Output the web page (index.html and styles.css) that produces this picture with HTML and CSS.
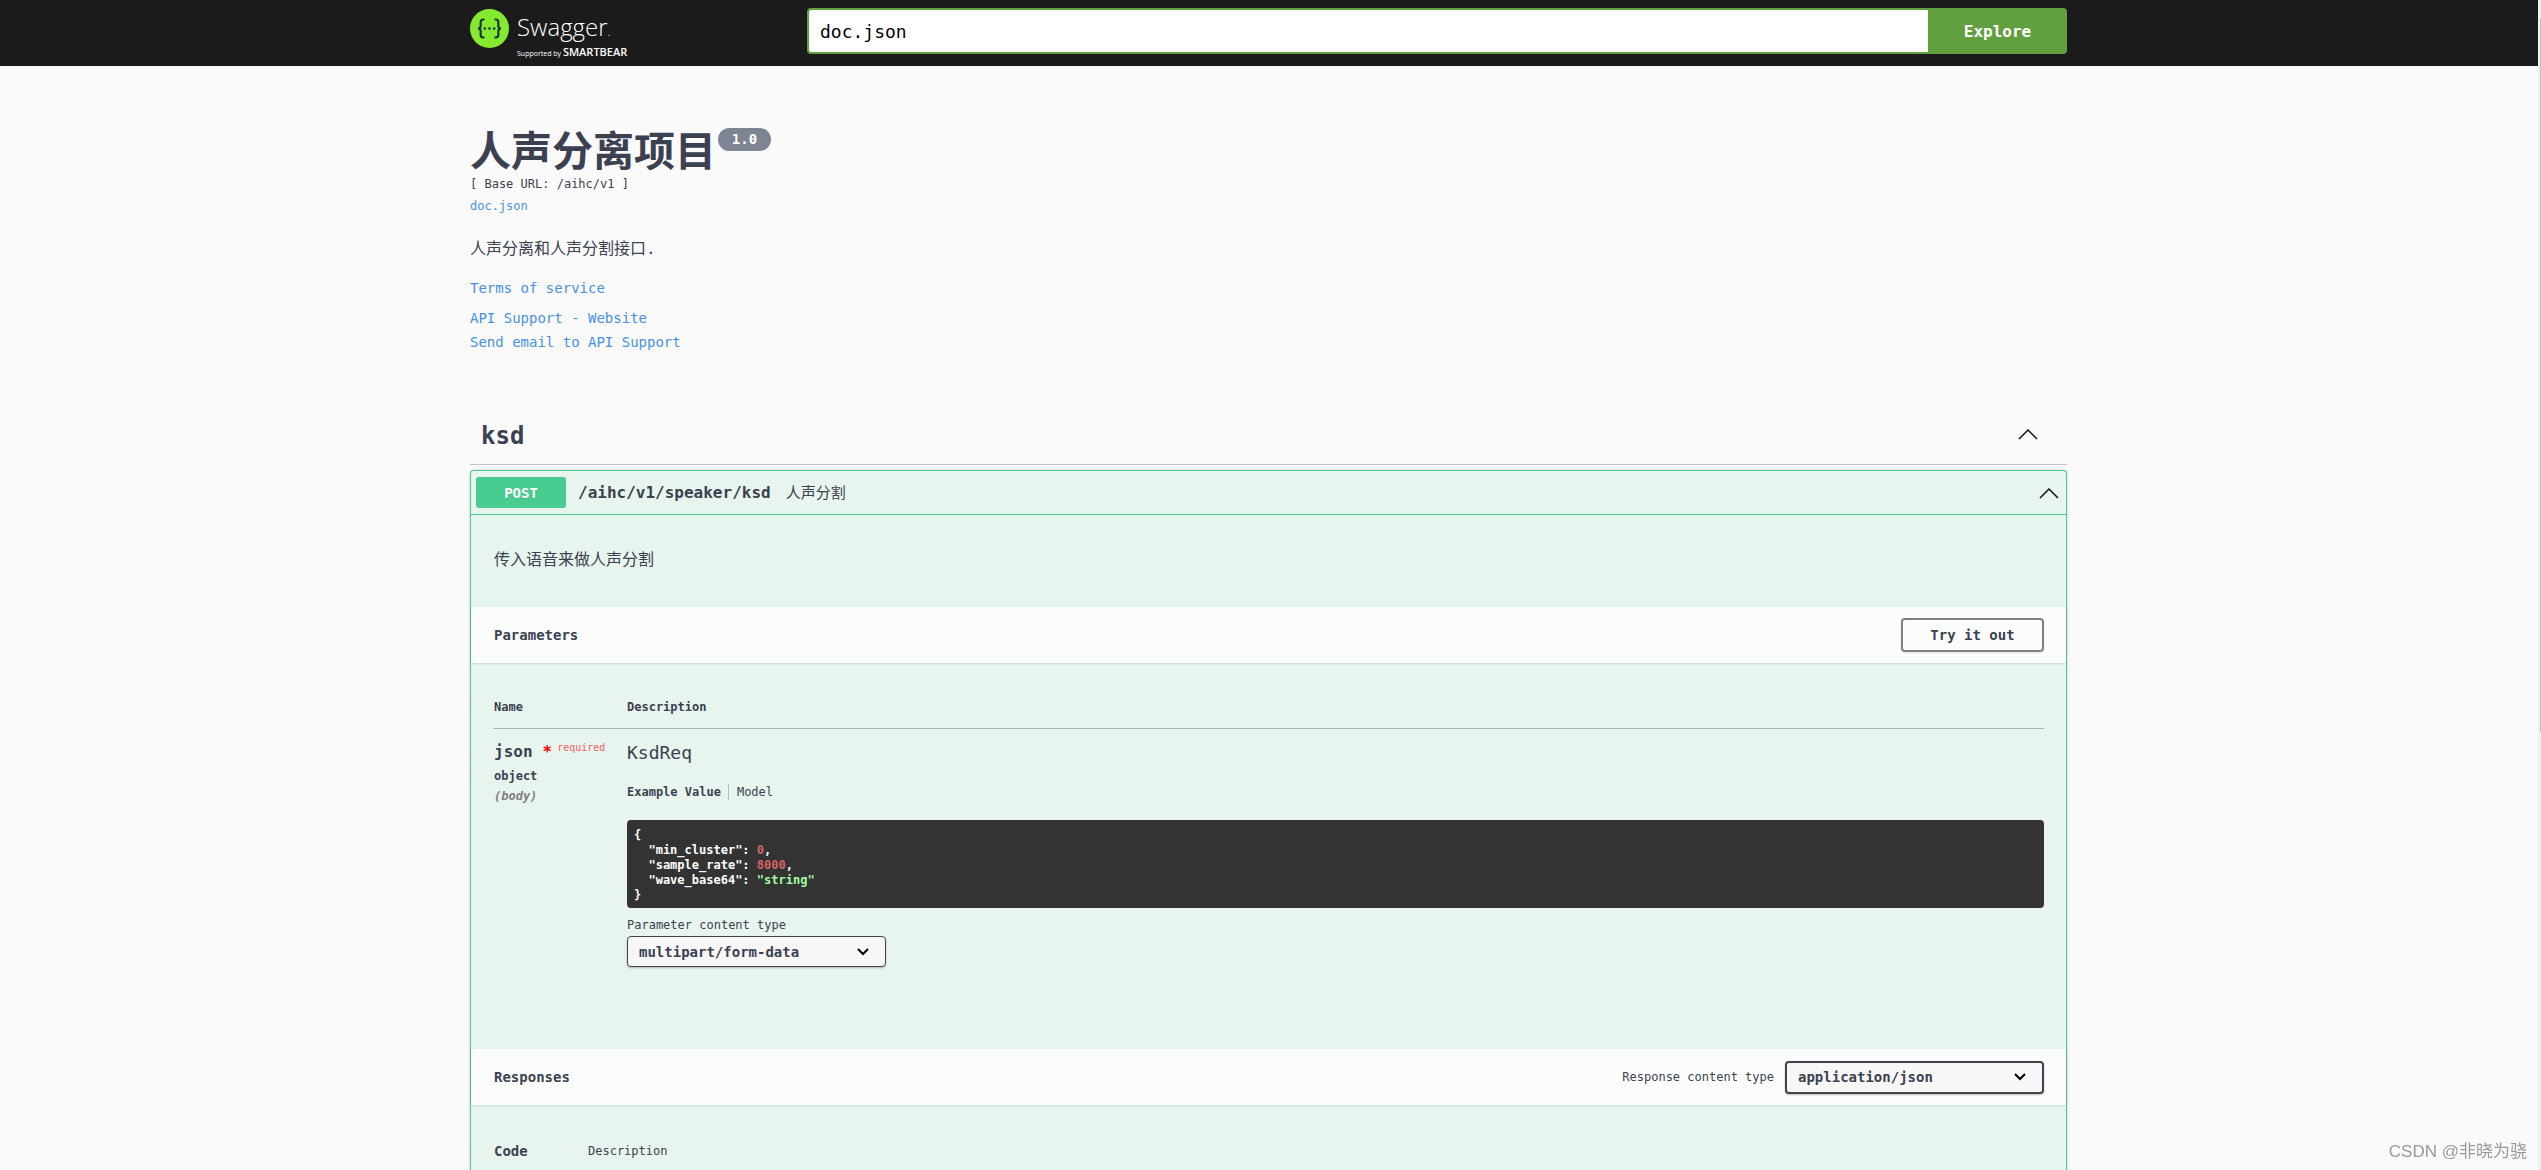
FILE: index.html
```html
<!DOCTYPE html>
<html lang="zh-CN">
<head>
<meta charset="utf-8">
<title>Swagger UI</title>
<link rel="stylesheet" href="styles.css">
</head>
<body>
<header class="topbar">
  <div class="wrapper topbar-inner">
    <a class="logo" href="#">
      <svg class="logo-mark" viewBox="0 0 39 39" aria-hidden="true">
        <circle cx="19.500" cy="19.500" r="19.500" fill="#85ea2d"/>
        <g fill="none" stroke="#173647" stroke-width="2.200">
          <path d="M14.500 10.500h-1.300q-2.500 0-2.500 2.500v3.400q0 3.100-2.700 3.100q2.700 0 2.700 3.100v3.400q0 2.500 2.500 2.500h1.300"/>
          <path d="M24.500 10.500h1.300q2.500 0 2.500 2.500v3.400q0 3.100 2.700 3.100q-2.700 0-2.700 3.100v3.400q0 2.500-2.500 2.500h-1.300"/>
        </g>
        <g fill="#173647"><circle cx="14.800" cy="19.500" r="1.300"/><circle cx="19.500" cy="19.500" r="1.300"/><circle cx="24.200" cy="19.500" r="1.300"/></g>
      </svg>
      <span class="logo-text">
        <span class="logo-name">Swagger<span class="logo-dot">.</span></span>
        <span class="logo-by">Supported by <b>SMARTBEAR</b></span>
      </span>
    </a>
    <form class="search">
      <input class="search-input" type="text" value="doc.json" aria-label="Specification URL">
      <button class="search-button" type="button">Explore</button>
    </form>
  </div>
</header>

<main class="wrapper content">
  <section class="info">
    <h1 class="title">人声分离项目<span class="version">1.0</span></h1>
    <div class="base-url">[ Base URL: /aihc/v1 ]</div>
    <a class="spec-link" href="#">doc.json</a>
    <p class="description">人声分离和人声分割接口.</p>
    <a class="info-link terms" href="#">Terms of service</a>
    <a class="info-link" href="#">API Support - Website</a>
    <a class="info-link" href="#">Send email to API Support</a>
  </section>

  <section class="tag">
    <h2 class="tag-header">ksd
      <svg class="chevron" viewBox="0 0 20 12" aria-hidden="true"><path d="M1 11l9-9 9 9"/></svg>
    </h2>
    <article class="operation">
      <div class="summary">
        <button class="method" type="button">POST</button>
        <span class="path">/aihc/v1/speaker/ksd</span>
        <span class="summary-text">人声分割</span>
        <svg class="chevron" viewBox="0 0 20 12" aria-hidden="true"><path d="M1 11l9-9 9 9"/></svg>
      </div>
      <p class="operation-description">传入语音来做人声分割</p>

      <div class="section-header">
        <h3 class="section-title">Parameters</h3>
        <button class="try-out" type="button">Try it out</button>
      </div>
      <div class="section-body parameters">
        <table class="table">
          <thead><tr><th class="col-name">Name</th><th>Description</th></tr></thead>
          <tbody>
            <tr>
              <td>
                <div class="param-name">json <span class="star">*</span><span class="required">required</span></div>
                <div class="param-type">object</div>
                <div class="param-in">(body)</div>
              </td>
              <td>
                <div class="model-name">KsdReq</div>
                <div class="tabs"><span class="tab tab-active">Example Value</span><span class="tab">Model</span></div>
<pre class="example"><span>{</span>
<span>  "min_cluster": </span><span class="num">0</span><span>,</span>
<span>  "sample_rate": </span><span class="num">8000</span><span>,</span>
<span>  "wave_base64": </span><span class="str">"string"</span>
<span>}</span></pre>
                <label class="type-label" for="param-type">Parameter content type</label>
                <select class="select" id="param-type"><option>multipart/form-data</option></select>
              </td>
            </tr>
          </tbody>
        </table>
      </div>

      <div class="section-header">
        <h3 class="section-title">Responses</h3>
        <div class="response-type">
          <label for="response-type">Response content type</label>
          <select class="select select-strong" id="response-type"><option>application/json</option></select>
        </div>
      </div>
      <div class="section-body">
        <table class="table responses">
          <thead><tr><th class="col-code">Code</th><th class="col-text">Description</th></tr></thead>
        </table>
      </div>
    </article>
  </section>
</main>
<div class="scroll-track" aria-hidden="true"><div class="scroll-thumb"></div></div>
<div class="watermark">CSDN @非晓为骁</div>
</body>
</html>
```
FILE: styles.css
```css
* { box-sizing: border-box; }

body {
  margin: 0;
  height: 100vh;
  overflow: hidden;
  display: flex;
  flex-direction: column;
  padding-right: 4px;
  background: #fafafa;
  color: #3b4151;
  font-family: "DejaVu Sans Mono", "Noto Sans CJK SC", monospace;
  font-size: 12px;
  line-height: 20px;
}

h1, h2, h3, p, pre { margin: 0; }
a { color: #4990e2; text-decoration: none; }
button, input, select { font-family: inherit; color: inherit; }

.wrapper { width: 100%; max-width: 1597px; margin: 0 auto; }

/* Top bar: its background runs on to the scroll track */
.topbar { flex: none; margin-right: -4px; padding-right: 4px; background: #1b1b1b; }
.topbar-inner { display: flex; align-items: center; height: 66px; padding-bottom: 4px; }
.logo { display: flex; gap: 8px; width: 337px; height: 44px; color: #fff; font-family: "Open Sans", sans-serif; }
.logo-mark { width: 39px; height: 39px; }
.logo-text { display: flex; flex-direction: column; }
.logo-name { font-size: 24px; font-weight: 300; line-height: 32px; padding-top: 2px; }
.logo-dot { font-size: 12px; }
.logo-by { font-size: 7px; line-height: 8px; white-space: nowrap; }
.logo-by b { font-size: 11px; font-weight: 600; }

.search { flex: 1; display: flex; height: 46px; }
.search-input {
  flex: 1;
  min-width: 0;
  padding: 0 11px;
  border: 2px solid #62a03f;
  border-right: 0;
  border-radius: 4px 0 0 4px;
  background: #fff;
  color: #000;
  font-size: 18px;
  outline: 0;
}
.search-button {
  width: 139px;
  border: 0;
  border-radius: 0 4px 4px 0;
  background: #62a03f;
  color: #fff;
  font-size: 16px;
  font-weight: 700;
}

/* API info */
.content { flex: 1; display: flex; flex-direction: column; }
.info { display: flex; flex-direction: column; align-items: flex-start; padding: 62px 0 54px; }
.title { display: flex; align-items: flex-start; gap: 2px; margin-bottom: 5px; font-size: 41px; line-height: 40px; font-family: "Noto Sans CJK SC", sans-serif; }
.version {
  width: 53px;
  border-radius: 12px;
  background: #7d8492;
  color: #fff;
  font: 700 14px/23px "DejaVu Sans Mono", monospace;
  text-align: center;
}
.base-url, .spec-link { line-height: 22px; }
.description { margin: 20px 0 15px; font-size: 16px; line-height: 24px; }
.info-link { font-size: 14px; line-height: 24px; }
.terms { margin-bottom: 6px; }

/* Tag and operation */
.tag { flex: 1; display: flex; flex-direction: column; }
.tag-header {
  display: flex;
  align-items: center;
  justify-content: space-between;
  height: 57px;
  margin-bottom: 5px;
  padding: 0 29px 0 11px;
  border-bottom: 1px solid #c0c2c8;
  font-size: 24px;
}
.chevron { width: 20px; height: 12px; fill: none; stroke: #111; stroke-width: 1.5; }
.tag-header .chevron { margin-bottom: 4px; }

.operation {
  flex: 1;
  border: 1px solid #49cc90;
  border-bottom: 0;
  border-radius: 4px 4px 0 0;
  background: #e7f5ee;
  box-shadow: 0 0 3px rgba(0, 0, 0, .19);
}
.summary { display: flex; align-items: center; height: 44px; padding: 0 7px 0 5px; border-bottom: 1px solid #49cc90; }
.method {
  width: 90px;
  height: 31px;
  margin-right: 12px;
  border: 0;
  border-radius: 3px;
  background: #49cc90;
  color: #fff;
  font-size: 14px;
  font-weight: 700;
  text-shadow: 0 1px 0 rgba(0, 0, 0, .1);
}
.path { font-size: 16px; font-weight: 700; }
.summary-text { flex: 1; padding-left: 15px; font-size: 15px; }
.operation-description { padding: 33px 23px 35px; font-size: 16px; line-height: 24px; }

.section-header {
  display: flex;
  align-items: center;
  justify-content: space-between;
  height: 56px;
  padding: 0 22px 0 23px;
  background: #fbfdfc;
  box-shadow: 0 1px 2px rgba(0, 0, 0, .12);
}
.section-title { font-size: 14px; }
.try-out {
  width: 143px;
  height: 34px;
  border: 2px solid #808080;
  border-radius: 4px;
  background: transparent;
  box-shadow: 0 1px 2px rgba(0, 0, 0, .1);
  font-size: 14px;
  font-weight: 700;
}

.section-body { padding: 21px 22px 0; }
.parameters { padding-bottom: 82px; }
.table { width: 100%; border-collapse: collapse; table-layout: fixed; }
.table th { padding: 13px 0 11px; border-bottom: 1px solid #a5b8b4; text-align: left; }
.table td { padding: 12px 0 0; vertical-align: top; }
.table th:first-child, .table td:first-child { padding-left: 1px; }
.table .col-name { width: 134px; }
.table .col-code { width: 95px; font-size: 14px; }
.table .col-text { font-weight: 400; }
.table.responses th { padding-top: 15px; }

.param-name { display: flex; align-items: flex-start; height: 25px; font-size: 16px; font-weight: 700; line-height: 22px; }
.star { margin-left: 10px; color: #f00; font-size: 16px; }
.required { margin-left: 5px; color: #f55f5f; font-size: 10px; font-weight: 400; line-height: 14px; }
.param-type { font-weight: 700; }
.param-in { color: #808080; font-style: italic; font-weight: 700; }

.model-name { font-size: 18px; line-height: 24px; }
.tabs { display: flex; margin: 19px 0 20px; line-height: 16px; }
.tab-active { margin-right: 8px; padding-right: 7px; border-right: 1px solid #b0bdb9; font-weight: 700; }
.example {
  margin-bottom: 7px;
  padding: 8px 7px 5px;
  border-radius: 4px;
  background: #333;
  color: #fff;
  font-family: inherit;
  font-weight: 700;
  line-height: 15px;
}
.num { color: #d36363; }
.str { color: #a2fca2; }
.type-label { display: block; margin-bottom: 1px; }
.select {
  display: block;
  width: 259px;
  height: 31px;
  padding: 0 40px 0 11px;
  border: 1px solid #41444e;
  border-radius: 4px;
  appearance: none;
  background: #f7f7f7 url("data:image/svg+xml,%3Csvg xmlns='http://www.w3.org/2000/svg' width='12' height='8' viewBox='0 0 12 8'%3E%3Cpath d='M1 1l5 5 5-5' fill='none' stroke='%23000' stroke-width='2'/%3E%3C/svg%3E") no-repeat right 16px center;
  box-shadow: 0 1px 2px rgba(0, 0, 0, .25);
  font-size: 14px;
  font-weight: 700;
}
.select-strong { height: 33px; border-width: 2px; }
.response-type { display: flex; align-items: center; gap: 11px; }

/* Overlays */
.scroll-track { position: fixed; top: 0; right: 0; bottom: 0; width: 3px; padding: 18px 0 0 2px; background: #f1f1f1; }
.scroll-thumb { height: 62%; background: #c1c1c1; }
.watermark {
  position: fixed;
  right: 14px;
  bottom: 6px;
  color: #999;
  font: 17px/24px "Liberation Sans", "Noto Sans CJK SC", sans-serif;
}
```
